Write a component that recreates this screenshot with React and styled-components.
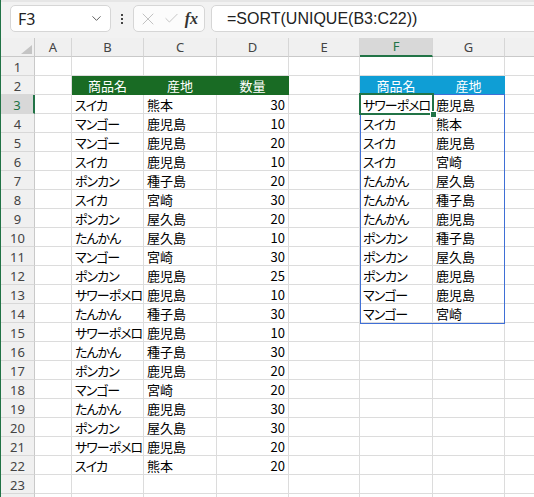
import React from 'react';
import styled, { createGlobalStyle, css } from 'styled-components';
import { ChevronDown, X, Check } from 'lucide-react';

const GlobalStyle = createGlobalStyle`
  html, body {
    margin: 0;
    padding: 0;
    background: #ffffff;
  }
  * {
    box-sizing: border-box;
  }
`;

const GREEN = '#196b24';
const BLUE = '#0f9ed5';
const SEL = '#217346';
const CJK = `"Noto Sans CJK JP", "Noto Sans", sans-serif`;
const UI = `"Noto Sans", "Liberation Sans", sans-serif`;

const COLS = ['A', 'B', 'C', 'D', 'E', 'F', 'G', ''];

const table = [
  ['スイカ', '熊本', 30],
  ['マンゴー', '鹿児島', 10],
  ['マンゴー', '鹿児島', 20],
  ['スイカ', '鹿児島', 10],
  ['ポンカン', '種子島', 20],
  ['スイカ', '宮崎', 30],
  ['ポンカン', '屋久島', 20],
  ['たんかん', '屋久島', 10],
  ['マンゴー', '宮崎', 30],
  ['ポンカン', '鹿児島', 25],
  ['サワーポメロ', '鹿児島', 10],
  ['たんかん', '種子島', 30],
  ['サワーポメロ', '鹿児島', 10],
  ['たんかん', '種子島', 30],
  ['ポンカン', '鹿児島', 20],
  ['マンゴー', '宮崎', 20],
  ['たんかん', '鹿児島', 30],
  ['ポンカン', '屋久島', 30],
  ['サワーポメロ', '鹿児島', 20],
  ['スイカ', '熊本', 20],
];

const unique = [
  ['サワーポメロ', '鹿児島'],
  ['スイカ', '熊本'],
  ['スイカ', '鹿児島'],
  ['スイカ', '宮崎'],
  ['たんかん', '屋久島'],
  ['たんかん', '種子島'],
  ['たんかん', '鹿児島'],
  ['ポンカン', '種子島'],
  ['ポンカン', '屋久島'],
  ['ポンカン', '鹿児島'],
  ['マンゴー', '鹿児島'],
  ['マンゴー', '宮崎'],
];

// kana are drawn narrower than kanji in the reference font (proportional kana)
const isKana = (ch) => /[\u3040-\u30ff]/.test(ch);

function CellText({ value }) {
  if (typeof value !== 'string') return value;
  const runs = [];
  for (const ch of value) {
    const k = isKana(ch);
    const last = runs[runs.length - 1];
    if (last && last.k === k) last.s += ch;
    else runs.push({ k, s: ch });
  }
  return runs.map((r, i) =>
    r.k ? <Kana key={i}>{r.s}</Kana> : <React.Fragment key={i}>{r.s}</React.Fragment>
  );
}

function buildRow(n) {
  const cells = COLS.map(() => ({ v: '' }));
  if (n === 2) {
    cells[1] = { v: '商品名', fill: GREEN, align: 'center', color: '#fff' };
    cells[2] = { v: '産地', fill: GREEN, align: 'center', color: '#fff' };
    cells[3] = { v: '数量', fill: GREEN, align: 'center', color: '#fff' };
    cells[5] = { v: '商品名', fill: BLUE, align: 'center', color: '#fff' };
    cells[6] = { v: '産地', fill: BLUE, align: 'center', color: '#fff' };
  }
  const t = table[n - 3];
  if (t) {
    cells[1] = { v: t[0] };
    cells[2] = { v: t[1] };
    cells[3] = { v: t[2], align: 'right' };
  }
  const u = unique[n - 3];
  if (u) {
    cells[5] = { v: u[0] };
    cells[6] = { v: u[1] };
  }
  return cells;
}

export default function App() {
  // row 24 only peeks in at the bottom edge, so it gets no label
  const rows = Array.from({ length: 24 }, (_, i) => i + 1);
  return (
    <>
      <GlobalStyle />
      <Page>
        <FormulaBar>
          <NameBox>
            <span>F3</span>
            <ChevronDown size={15} strokeWidth={1.5} color="#555" />
          </NameBox>
          <Dots>
            <i />
            <i />
            <i />
          </Dots>
          <ButtonGroup>
            <X size={20} strokeWidth={1.1} color="#bcbcbc" />
            <Check size={17} strokeWidth={1.2} color="#bcbcbc" />
            <Fx>fx</Fx>
          </ButtonGroup>
          <FormulaInput>=SORT(UNIQUE(B3:C22))</FormulaInput>
        </FormulaBar>

        <Sheet>
          <Corner />
          {COLS.map((c, i) => (
            <ColHeader key={i} $active={c === 'F'}>
              {c}
            </ColHeader>
          ))}
          {rows.map((n) => (
            <React.Fragment key={n}>
              <RowHeader $active={n === 3}>{n < 24 ? n : ''}</RowHeader>
              {buildRow(n).map((cell, i) => (
                <Cell
                  key={i}
                  $fill={cell.fill}
                  $align={cell.align}
                  $color={cell.color}
                >
                  <CellText value={cell.v} />
                </Cell>
              ))}
            </React.Fragment>
          ))}

          <SpillBorder />
          <Selection>
            <FillHandle />
          </Selection>
        </Sheet>
      </Page>
    </>
  );
}

const Page = styled.div`
  width: 534px;
  height: 497px;
  overflow: hidden;
  border-left: 1px solid ${SEL};
  background: #fff;
  display: flex;
  flex-direction: column;
`;

const FormulaBar = styled.div`
  height: 38px;
  flex: 0 0 38px;
  background: #f2f2f2;
  border-top: 2px solid #e6e6e6;
  display: flex;
  align-items: flex-start;
  padding: 3px 0 0 9px;
`;

const boxBase = css`
  height: 27px;
  background: #fff;
  border: 1px solid #d6d6d6;
  border-radius: 5px;
  display: flex;
  align-items: center;
`;

const NameBox = styled.div`
  ${boxBase};
  width: 101px;
  padding: 0 6px 0 7px;
  justify-content: space-between;
  font-family: ${UI};
  font-size: 16px;
  color: #222;
`;

const Dots = styled.div`
  width: 22px;
  height: 27px;
  display: flex;
  flex-direction: column;
  align-items: center;
  justify-content: center;
  gap: 2px;
  i {
    display: block;
    width: 2px;
    height: 2px;
    background: #444;
  }
`;

const ButtonGroup = styled.div`
  ${boxBase};
  width: 72px;
  padding: 0 4px 0 4px;
  justify-content: space-between;
  background: #fcfcfc;
`;

const Fx = styled.span`
  font-family: 'Liberation Serif', serif;
  font-style: italic;
  font-weight: bold;
  font-size: 16px;
  color: #333;
  padding-right: 2px;
`;

const FormulaInput = styled.div`
  ${boxBase};
  flex: 1;
  margin-left: 6px;
  margin-right: -10px;
  padding-left: 15px;
  font-family: 'Liberation Sans', Arial, sans-serif;
  font-size: 16px;
  color: #222;
`;

const Sheet = styled.div`
  position: relative;
  display: grid;
  grid-template-columns: 34px 37px 72px 73px 72px 71px 73px 72px 72px;
  grid-auto-rows: 19px;
  width: max-content;
`;

const headerBase = css`
  background: #f0f0f0;
  font-family: ${UI};
  font-size: 13px;
  color: #444;
  text-align: center;
`;

const Corner = styled.div`
  ${headerBase};
  position: relative;
  border-right: 1px solid #c9c9c9;
  border-bottom: 1px solid #c9c9c9;
  &::after {
    content: '';
    position: absolute;
    right: 2px;
    bottom: 2px;
    border-left: 11px solid transparent;
    border-bottom: 9px solid #c4c4c4;
  }
`;

const ColHeader = styled.div`
  ${headerBase};
  line-height: 18px;
  border-right: 1px solid #d6d6d6;
  border-bottom: 1px solid #c9c9c9;
  ${(p) =>
    p.$active &&
    css`
      background: #d8d8d8;
      color: ${SEL};
      border-bottom: 2px solid ${SEL};
      line-height: 17px;
    `}
`;

const RowHeader = styled.div`
  ${headerBase};
  line-height: 18px;
  padding-top: 1px;
  border-right: 1px solid #c9c9c9;
  border-bottom: 1px solid #d8d8d8;
  ${(p) =>
    p.$active &&
    css`
      background: #d8d8d8;
      color: ${SEL};
      border-right: 2px solid ${SEL};
    `}
`;

const Cell = styled.div`
  font-family: ${CJK};
  font-size: 13px;
  line-height: 18px;
  padding: 1px 3px 0 3px;
  white-space: nowrap;
  overflow: hidden;
  color: ${(p) => p.$color || '#000'};
  text-align: ${(p) => p.$align || 'left'};
  background: ${(p) => p.$fill || '#fff'};
  border-right: 1px solid ${(p) => p.$fill || '#dcdcdc'};
  border-bottom: 1px solid ${(p) => p.$fill || '#dcdcdc'};
`;

const Kana = styled.span`
  font-feature-settings: 'palt' 1;
  font-variant-east-asian: proportional-width;
  letter-spacing: -1px;
`;

const SpillBorder = styled.div`
  position: absolute;
  left: 359px;
  top: 56px;
  width: 145px;
  height: 230px;
  border: 1px solid #3f6fd6;
  pointer-events: none;
`;

const Selection = styled.div`
  position: absolute;
  left: 358px;
  top: 55px;
  width: 75px;
  height: 22px;
  border: 2px solid ${SEL};
  pointer-events: none;
`;

const FillHandle = styled.div`
  position: absolute;
  right: -5px;
  bottom: -5px;
  width: 7px;
  height: 7px;
  background: ${SEL};
  border: 1px solid #fff;
`;
